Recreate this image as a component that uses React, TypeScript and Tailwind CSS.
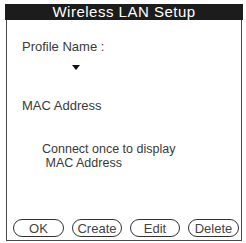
export default function App() {
  const buttons = [
    { label: "OK", w: "w-[51px]" },
    { label: "Create", w: "w-[50px]" },
    { label: "Edit", w: "w-[50px]" },
    { label: "Delete", w: "w-[51px]" },
  ];

  return (
    <div
      className="w-[246px] h-[243px] bg-white pt-[4px] pl-[5px] text-[#3a3a3a]"
      style={{ fontFamily: '"Liberation Sans", Arial, sans-serif' }}
    >
      <div className="w-[238px] h-[237px] flex flex-col">
        {/* title bar */}
        <div className="h-[16px] bg-[#1c1c1c] text-white text-[15px] leading-[16px] text-center tracking-[0.5px]">
          Wireless LAN Setup
        </div>

        {/* dialog body */}
        <div className="ml-[1px] w-[236px] flex-1 flex flex-col border-x border-b border-[#4a4a4a] text-[13px] leading-[15px]">
          <div className="pl-[15px] pt-[19px]">Profile Name :</div>
          <div className="ml-[65px] mt-[11px] w-0 h-0 border-x-[4px] border-t-[5px] border-x-transparent border-t-[#111]" />
          <div className="pl-[15px] mt-[28px]">MAC Address</div>
          <div className="pl-[35px] mt-[29px] text-[12.5px] leading-[14px]">
            <div>Connect once to display</div>
            <div>&nbsp;MAC Address</div>
          </div>

          <div className="mt-auto mb-[3px] pl-[6px] flex gap-[8px]">
            {buttons.map((b) => (
              <div
                key={b.label}
                className={`${b.w} h-[18px] border border-[#333] rounded-[9px] flex items-center justify-center text-[13px] leading-none text-[#444]`}
              >
                {b.label}
              </div>
            ))}
          </div>
        </div>
      </div>
    </div>
  );
}
